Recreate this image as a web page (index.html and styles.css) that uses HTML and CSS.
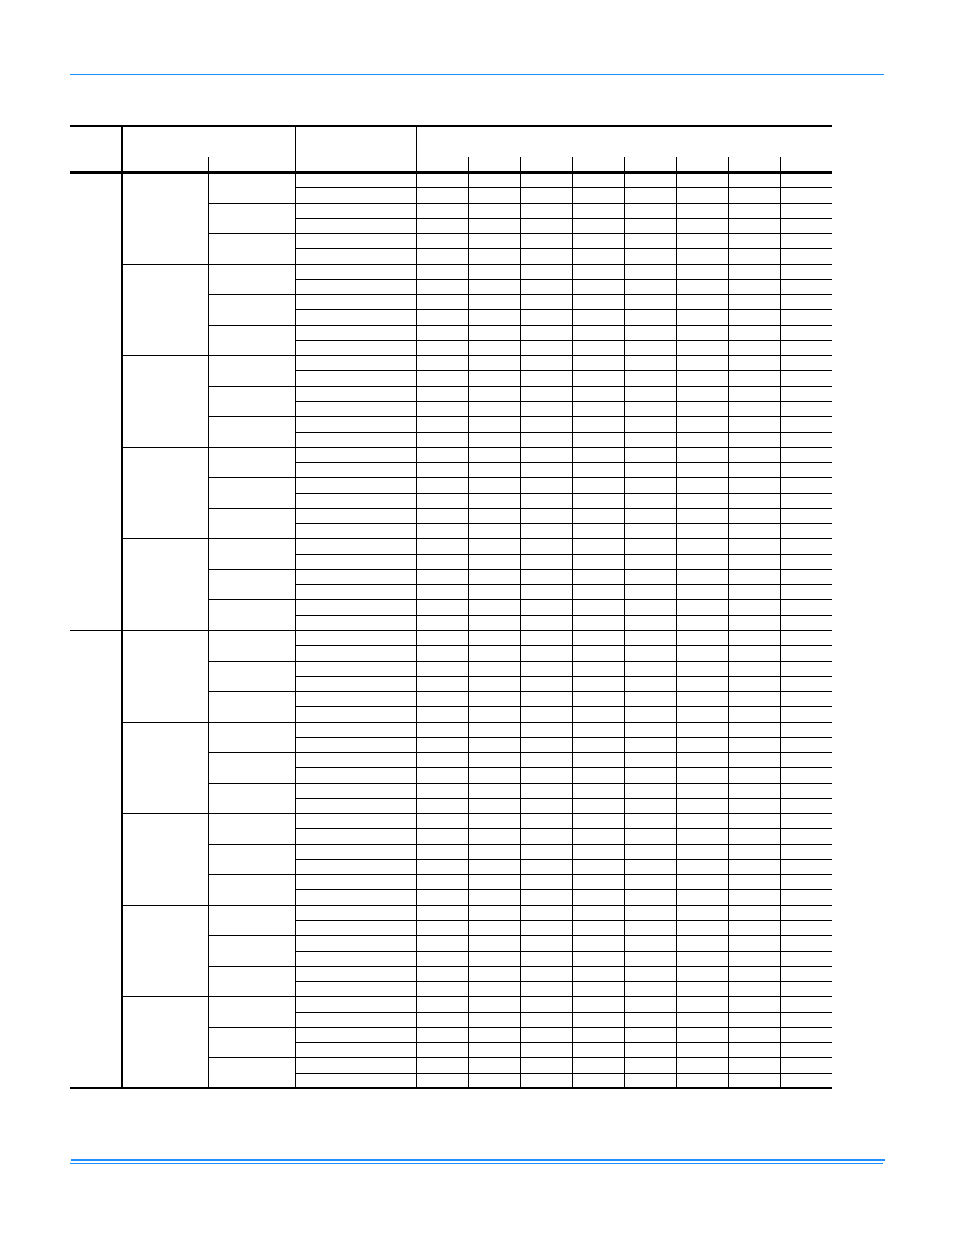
FILE: index.html
```html
<!DOCTYPE html>
<html>
<head>
<meta charset="utf-8">
<link rel="stylesheet" href="styles.css">
</head>
<body>
<div class="page">
  <div class="rule-top"></div>
  <table class="grid">
    <colgroup>
      <col class="c1"><col class="c2"><col class="c3"><col class="c4">
      <col class="cd"><col class="cd"><col class="cd"><col class="cd"><col class="cd"><col class="cd"><col class="cd"><col class="cd">
    </colgroup>
    <thead>
      <tr class="h1">
        <th class="first" rowspan="2"></th>
        <th class="merge" colspan="2"></th>
        <th rowspan="2"></th>
        <th class="merge last" colspan="8"></th>
      </tr>
      <tr class="h2">
        <th class="sub"></th><th class="sub"></th>
        <th class="sub"></th><th class="sub"></th><th class="sub"></th><th class="sub"></th><th class="sub"></th><th class="sub"></th><th class="sub"></th><th class="sub last"></th>
      </tr>
    </thead>
    <tbody>
      <!-- group 1 -->
      <tr><td class="first" rowspan="30"></td><td class="g" rowspan="6"></td><td rowspan="2"></td><td></td><td></td><td></td><td></td><td></td><td></td><td></td><td></td><td class="last"></td></tr>
      <tr><td></td><td></td><td></td><td></td><td></td><td></td><td></td><td></td><td class="last"></td></tr>
      <tr><td rowspan="2"></td><td></td><td></td><td></td><td></td><td></td><td></td><td></td><td></td><td class="last"></td></tr>
      <tr><td></td><td></td><td></td><td></td><td></td><td></td><td></td><td></td><td class="last"></td></tr>
      <tr><td rowspan="2"></td><td></td><td></td><td></td><td></td><td></td><td></td><td></td><td></td><td class="last"></td></tr>
      <tr><td></td><td></td><td></td><td></td><td></td><td></td><td></td><td></td><td class="last"></td></tr>

      <tr><td class="g" rowspan="6"></td><td rowspan="2"></td><td></td><td></td><td></td><td></td><td></td><td></td><td></td><td></td><td class="last"></td></tr>
      <tr><td></td><td></td><td></td><td></td><td></td><td></td><td></td><td></td><td class="last"></td></tr>
      <tr><td rowspan="2"></td><td></td><td></td><td></td><td></td><td></td><td></td><td></td><td></td><td class="last"></td></tr>
      <tr><td></td><td></td><td></td><td></td><td></td><td></td><td></td><td></td><td class="last"></td></tr>
      <tr><td rowspan="2"></td><td></td><td></td><td></td><td></td><td></td><td></td><td></td><td></td><td class="last"></td></tr>
      <tr><td></td><td></td><td></td><td></td><td></td><td></td><td></td><td></td><td class="last"></td></tr>

      <tr><td class="g" rowspan="6"></td><td rowspan="2"></td><td></td><td></td><td></td><td></td><td></td><td></td><td></td><td></td><td class="last"></td></tr>
      <tr><td></td><td></td><td></td><td></td><td></td><td></td><td></td><td></td><td class="last"></td></tr>
      <tr><td rowspan="2"></td><td></td><td></td><td></td><td></td><td></td><td></td><td></td><td></td><td class="last"></td></tr>
      <tr><td></td><td></td><td></td><td></td><td></td><td></td><td></td><td></td><td class="last"></td></tr>
      <tr><td rowspan="2"></td><td></td><td></td><td></td><td></td><td></td><td></td><td></td><td></td><td class="last"></td></tr>
      <tr><td></td><td></td><td></td><td></td><td></td><td></td><td></td><td></td><td class="last"></td></tr>

      <tr><td class="g" rowspan="6"></td><td rowspan="2"></td><td></td><td></td><td></td><td></td><td></td><td></td><td></td><td></td><td class="last"></td></tr>
      <tr><td></td><td></td><td></td><td></td><td></td><td></td><td></td><td></td><td class="last"></td></tr>
      <tr><td rowspan="2"></td><td></td><td></td><td></td><td></td><td></td><td></td><td></td><td></td><td class="last"></td></tr>
      <tr><td></td><td></td><td></td><td></td><td></td><td></td><td></td><td></td><td class="last"></td></tr>
      <tr><td rowspan="2"></td><td></td><td></td><td></td><td></td><td></td><td></td><td></td><td></td><td class="last"></td></tr>
      <tr><td></td><td></td><td></td><td></td><td></td><td></td><td></td><td></td><td class="last"></td></tr>

      <tr><td class="g" rowspan="6"></td><td rowspan="2"></td><td></td><td></td><td></td><td></td><td></td><td></td><td></td><td></td><td class="last"></td></tr>
      <tr><td></td><td></td><td></td><td></td><td></td><td></td><td></td><td></td><td class="last"></td></tr>
      <tr><td rowspan="2"></td><td></td><td></td><td></td><td></td><td></td><td></td><td></td><td></td><td class="last"></td></tr>
      <tr><td></td><td></td><td></td><td></td><td></td><td></td><td></td><td></td><td class="last"></td></tr>
      <tr><td rowspan="2"></td><td></td><td></td><td></td><td></td><td></td><td></td><td></td><td></td><td class="last"></td></tr>
      <tr><td></td><td></td><td></td><td></td><td></td><td></td><td></td><td></td><td class="last"></td></tr>

      <!-- group 2 -->
      <tr><td class="first" rowspan="30"></td><td class="g" rowspan="6"></td><td rowspan="2"></td><td></td><td></td><td></td><td></td><td></td><td></td><td></td><td></td><td class="last"></td></tr>
      <tr><td></td><td></td><td></td><td></td><td></td><td></td><td></td><td></td><td class="last"></td></tr>
      <tr><td rowspan="2"></td><td></td><td></td><td></td><td></td><td></td><td></td><td></td><td></td><td class="last"></td></tr>
      <tr><td></td><td></td><td></td><td></td><td></td><td></td><td></td><td></td><td class="last"></td></tr>
      <tr><td rowspan="2"></td><td></td><td></td><td></td><td></td><td></td><td></td><td></td><td></td><td class="last"></td></tr>
      <tr><td></td><td></td><td></td><td></td><td></td><td></td><td></td><td></td><td class="last"></td></tr>

      <tr><td class="g" rowspan="6"></td><td rowspan="2"></td><td></td><td></td><td></td><td></td><td></td><td></td><td></td><td></td><td class="last"></td></tr>
      <tr><td></td><td></td><td></td><td></td><td></td><td></td><td></td><td></td><td class="last"></td></tr>
      <tr><td rowspan="2"></td><td></td><td></td><td></td><td></td><td></td><td></td><td></td><td></td><td class="last"></td></tr>
      <tr><td></td><td></td><td></td><td></td><td></td><td></td><td></td><td></td><td class="last"></td></tr>
      <tr><td rowspan="2"></td><td></td><td></td><td></td><td></td><td></td><td></td><td></td><td></td><td class="last"></td></tr>
      <tr><td></td><td></td><td></td><td></td><td></td><td></td><td></td><td></td><td class="last"></td></tr>

      <tr><td class="g" rowspan="6"></td><td rowspan="2"></td><td></td><td></td><td></td><td></td><td></td><td></td><td></td><td></td><td class="last"></td></tr>
      <tr><td></td><td></td><td></td><td></td><td></td><td></td><td></td><td></td><td class="last"></td></tr>
      <tr><td rowspan="2"></td><td></td><td></td><td></td><td></td><td></td><td></td><td></td><td></td><td class="last"></td></tr>
      <tr><td></td><td></td><td></td><td></td><td></td><td></td><td></td><td></td><td class="last"></td></tr>
      <tr><td rowspan="2"></td><td></td><td></td><td></td><td></td><td></td><td></td><td></td><td></td><td class="last"></td></tr>
      <tr><td></td><td></td><td></td><td></td><td></td><td></td><td></td><td></td><td class="last"></td></tr>

      <tr><td class="g" rowspan="6"></td><td rowspan="2"></td><td></td><td></td><td></td><td></td><td></td><td></td><td></td><td></td><td class="last"></td></tr>
      <tr><td></td><td></td><td></td><td></td><td></td><td></td><td></td><td></td><td class="last"></td></tr>
      <tr><td rowspan="2"></td><td></td><td></td><td></td><td></td><td></td><td></td><td></td><td></td><td class="last"></td></tr>
      <tr><td></td><td></td><td></td><td></td><td></td><td></td><td></td><td></td><td class="last"></td></tr>
      <tr><td rowspan="2"></td><td></td><td></td><td></td><td></td><td></td><td></td><td></td><td></td><td class="last"></td></tr>
      <tr><td></td><td></td><td></td><td></td><td></td><td></td><td></td><td></td><td class="last"></td></tr>

      <tr><td class="g" rowspan="6"></td><td rowspan="2"></td><td></td><td></td><td></td><td></td><td></td><td></td><td></td><td></td><td class="last"></td></tr>
      <tr><td></td><td></td><td></td><td></td><td></td><td></td><td></td><td></td><td class="last"></td></tr>
      <tr><td rowspan="2"></td><td></td><td></td><td></td><td></td><td></td><td></td><td></td><td></td><td class="last"></td></tr>
      <tr><td></td><td></td><td></td><td></td><td></td><td></td><td></td><td></td><td class="last"></td></tr>
      <tr><td rowspan="2"></td><td></td><td></td><td></td><td></td><td></td><td></td><td></td><td></td><td class="last"></td></tr>
      <tr><td></td><td></td><td></td><td></td><td></td><td></td><td></td><td></td><td class="last"></td></tr>
    </tbody>
  </table>
  <div class="rule-bottom-thick"></div>
  <div class="rule-bottom-thin"></div>
</div>
</body>
</html>
```

FILE: styles.css
```css
html, body {
  margin: 0;
  padding: 0;
  background: #ffffff;
  font-family: "Liberation Sans", Arial, sans-serif;
}

.page {
  width: 954px;
  height: 1235px;
  padding: 74px 0 0 70px;
  box-sizing: border-box;
}

.rule-top {
  width: 814px;
  height: 1px;
  background: #1e90ff;
}

.grid {
  margin-top: 50px;
  width: 762px;
  border-collapse: collapse;
  table-layout: fixed;
  border-top: 2px solid #000;
  border-bottom: 2px solid #000;
  border-left: none;
  border-right: none;
}

.grid col.c1 { width: 52px; }
.grid col.c2 { width: 86px; }
.grid col.c3 { width: 87px; }
.grid col.c4 { width: 121px; }
.grid col.cd { width: 52px; }

.grid th,
.grid td {
  padding: 0;
  border: 1px solid #000;
  font-size: 0;
  line-height: 0;
}

.grid .first {
  border-left: none;
  border-right: 2px solid #000;
}

.grid .last {
  border-right: none;
}

.grid tr.h1 { height: 31px; }
.grid tr.h2 { height: 15.5px; }

.grid tr.h1 th.merge { border-bottom: none; }
.grid tr.h2 th.sub { border-top: none; }

.grid thead tr:last-child th,
.grid thead th[rowspan] {
  border-bottom: 3px solid #000;
}

.grid tbody tr { height: 15.27px; }

.rule-bottom-thick {
  margin-top: 70px;
  margin-left: 1px;
  width: 814px;
  height: 2px;
  background: #1e90ff;
}

.rule-bottom-thin {
  margin-top: 2px;
  width: 813px;
  height: 1px;
  background: #1e90ff;
}
```
